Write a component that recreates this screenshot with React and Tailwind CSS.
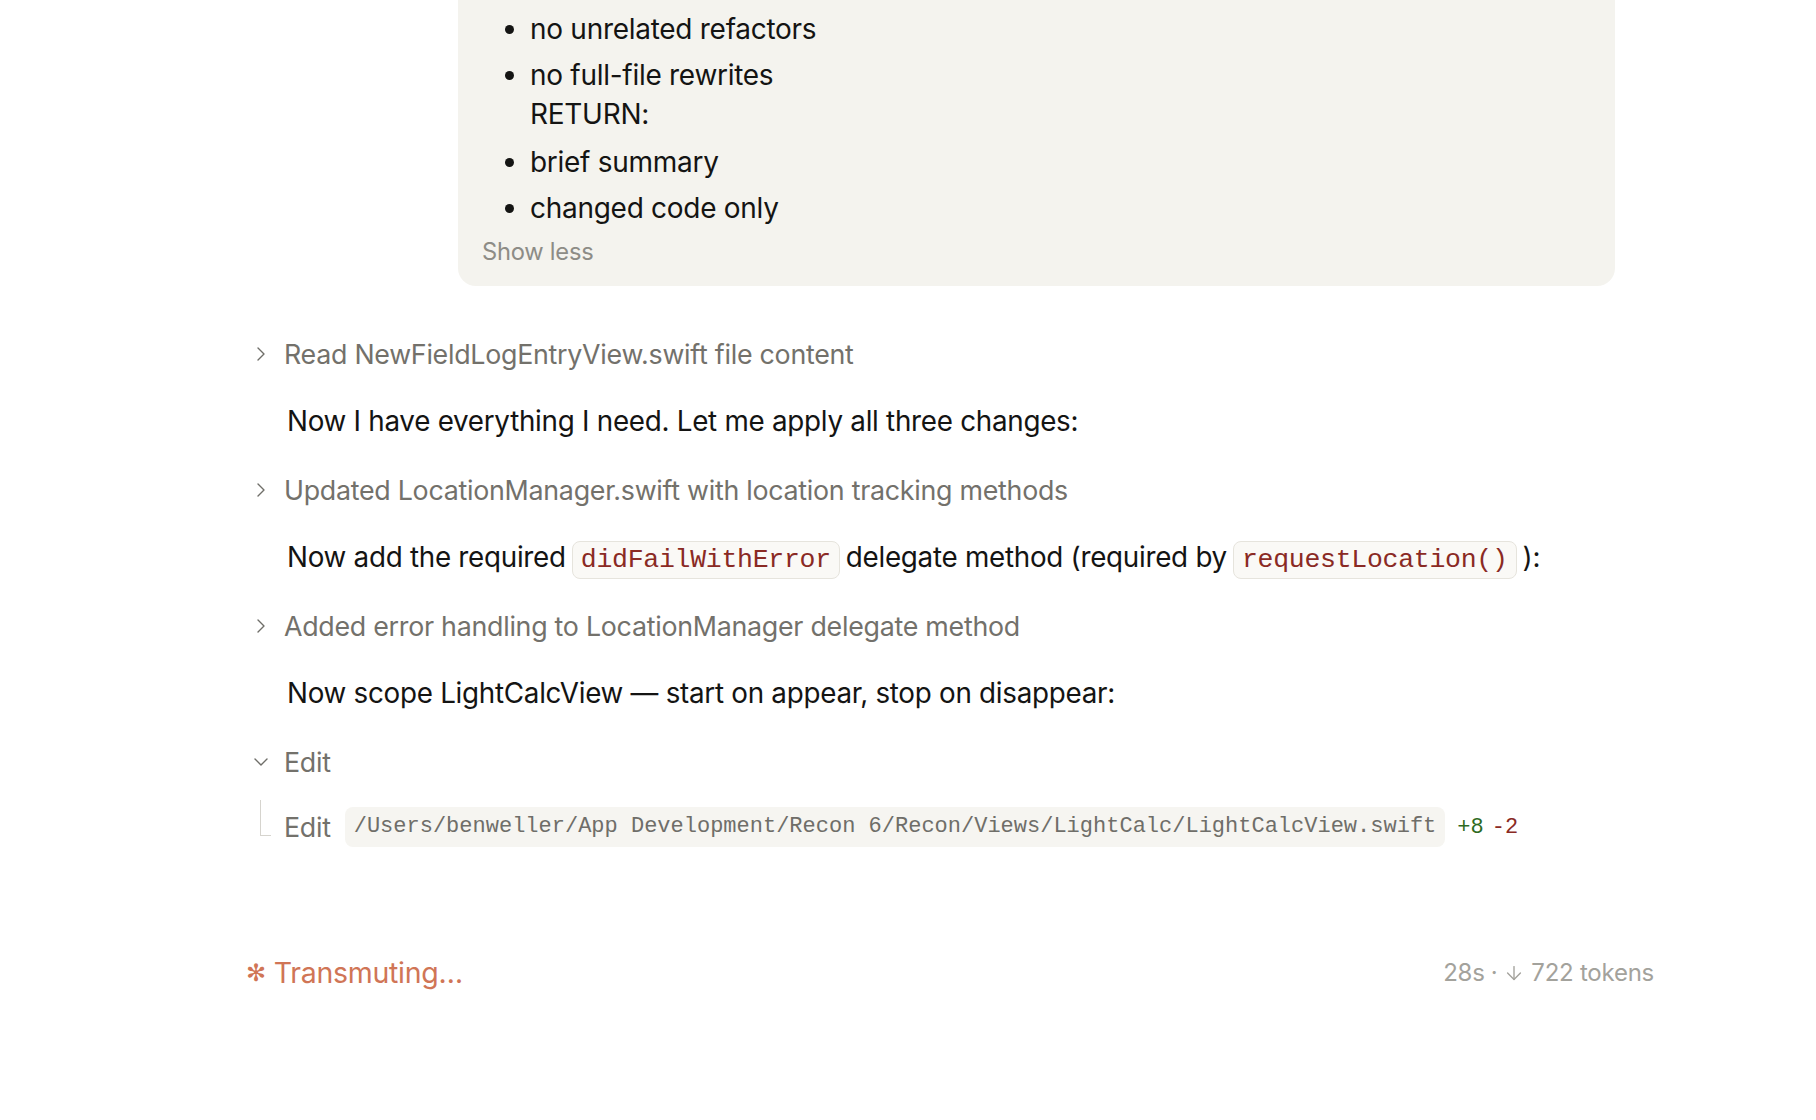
import React from 'react';
import { ChevronRight, ChevronDown, ArrowDown } from 'lucide-react';

const sans = "font-['Inter','Noto_Sans',sans-serif]";
const mono = "font-['Liberation_Mono','DejaVu_Sans_Mono',monospace]";

const Code = ({ children }) => (
    <code className={`${mono} mx-[6px] inline-block rounded-[8px] border border-[#e6e4dd] bg-[#faf9f6] px-[8px] py-[1px] text-[26.5px] leading-[34px] text-[#8a2a24]`}>
        {children}
    </code>
);

const StepRow = ({ open, children }) => (
    <div className="flex h-[68px] items-center">
        <div className="flex w-[37px] justify-start pl-[2px]">
            {open
                ? <ChevronDown size={24} strokeWidth={1.4} className="text-[#6f6e69]" />
                : <ChevronRight size={24} strokeWidth={1.4} className="text-[#6f6e69]" />}
        </div>
        <span className="text-[26.8px] tracking-[-0.01em] text-[#73716b]">{children}</span>
    </div>
);

const Text = ({ children }) => (
    <div className="flex h-[68px] items-center pl-[40px] text-[27.8px] tracking-[-0.01em] text-[#141413]">
        <p>{children}</p>
    </div>
);

export default function App() {
    return (
        <div className={`${sans} min-h-[1120px] w-full bg-white pl-[246px] pr-[162px]`}>

            {/* Expanded prompt card */}
            <div className="ml-[212px] mr-[39px] rounded-b-[18px] bg-[#f4f3ee] pb-[15px] pl-[24px] pt-[10px] text-[28px] tracking-[-0.01em] text-[#141413]">
                <ul className="list-disc pl-[48px] leading-[39px] marker:text-[#141413]">
                    <li>no unrelated refactors</li>
                    <li className="mt-[7px]">no full-file rewrites<br />RETURN:</li>
                    <li className="mt-[9px]">brief summary</li>
                    <li className="mt-[7px]">changed code only</li>
                </ul>
                <button className="mt-[8px] text-[23.7px] leading-[32px] tracking-[-0.01em] text-[#8d8c86]">Show less</button>
            </div>

            {/* Transcript */}
            <div className="mt-[34px] pl-[1px]">
                <StepRow>Read NewFieldLogEntryView.swift file content</StepRow>
                <Text>Now I have everything I need. Let me apply all three changes:</Text>
                <StepRow>Updated LocationManager.swift with location tracking methods</StepRow>
                <Text>
                    Now add the required<Code>didFailWithError</Code>delegate method (required by<Code>requestLocation()</Code>):
                </Text>
                <StepRow>Added error handling to LocationManager delegate method</StepRow>
                <Text>Now scope LightCalcView — start on appear, stop on disappear:</Text>
                <StepRow open>Edit</StepRow>

                <div className="flex h-[62px] items-center">
                    <div className="flex w-[37px] self-stretch justify-start">
                        <div className="ml-[13px] mt-[4px] h-[36px] w-[11px] border-b border-l border-[#d6d4ce]" />
                    </div>
                    <span className="text-[26.8px] tracking-[-0.01em] text-[#73716b]">Edit</span>
                    <span className={`${mono} ml-[14px] rounded-[8px] bg-[#f6f5f1] px-[9px] py-[6px] text-[22px] leading-[28px] text-[#6f6e69]`}>
                        /Users/benweller/App Development/Recon 6/Recon/Views/LightCalc/LightCalcView.swift
                    </span>
                    <span className={`${mono} ml-[12px] text-[22px] text-[#2e6b1f]`}>+8</span>
                    <span className={`${mono} ml-[8px] text-[22px] text-[#8a2a24]`}>-2</span>
                </div>
            </div>

            {/* Status line */}
            <div className="mt-[87px] flex h-[56px] items-center justify-between">
                <div className="flex items-center gap-[8px] text-[28.5px] tracking-[-0.01em] text-[#d07556]">
                    <span className="font-['DejaVu_Sans',sans-serif] text-[24px]">✻</span>
                    <span>Transmuting…</span>
                </div>
                <div className="flex items-center gap-[6px] text-[24px] tracking-[-0.01em] text-[#a3a29c]">
                    <span>28s</span>
                    <span>·</span>
                    <ArrowDown size={22} strokeWidth={1.5} />
                    <span>722 tokens</span>
                </div>
            </div>
        </div>
    );
}
